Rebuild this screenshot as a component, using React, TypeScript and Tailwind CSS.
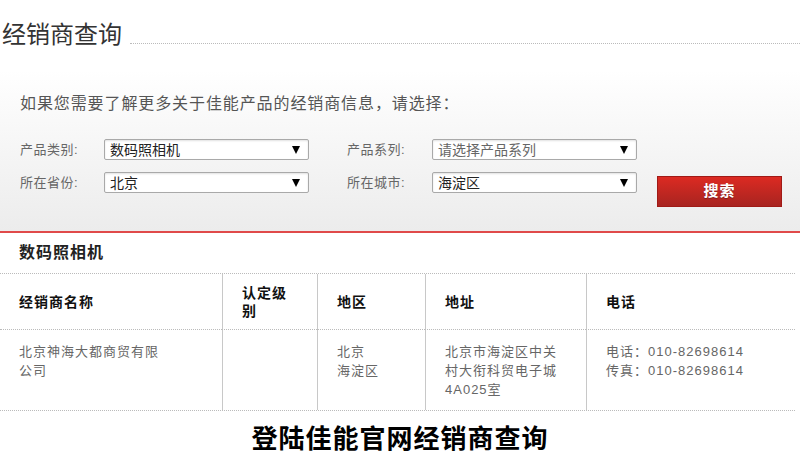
import * as React from "react"

const font = { fontFamily: '"Liberation Sans", "Noto Sans CJK SC", sans-serif' }

function FakeSelect({ value, muted }: { value: string; muted?: boolean }) {
  return (
    <div className="flex h-[21px] w-[205px] items-center justify-between rounded-[2px] border border-[#a9a9a9] bg-white pl-[5px] pr-[8px] shadow-[inset_0_1px_2px_rgba(0,0,0,0.12)]">
      <span className={`text-[14px] leading-none ${muted ? "text-[#666]" : "text-[#222]"}`}>{value}</span>
      <span className="h-0 w-0 border-x-[4px] border-t-[8px] border-x-transparent border-t-black" />
    </div>
  )
}

const headCell = "flex items-center px-[19px] text-[14px] font-bold leading-[18px] tracking-[1px] text-[#111]"
const dataCell = "px-[19px] pt-[12px] text-[13px] leading-[19px] tracking-[1px] text-[#666]"
const dataSide = "border-l border-t border-l-[#c8c8c8] border-t-[#bbb] [border-top-style:dotted]"

export default function App() {
  return (
    <div style={font} className="h-[457px] w-[800px] overflow-hidden bg-white">
      {/* title */}
      <div className="flex items-end pt-[20px]">
        <h1 className="pl-[2px] text-[24px] leading-[30px] text-[#333]">经销商查询</h1>
        <div className="mb-[6px] ml-[8px] flex-1 border-b border-dotted border-[#bbb]" />
      </div>

      {/* search panel */}
      <div className="mt-[20px] border-b-2 border-[#e04a4a] bg-gradient-to-b from-white to-[#ececec] pb-[24px] pl-[20px] pt-[24px]">
        <p className="text-[16px] leading-[20px] tracking-[0.9px] text-[#555]">如果您需要了解更多关于佳能产品的经销商信息，请选择：</p>

        <div className="mt-[25px] flex items-center">
          <span className="w-[84px] text-[13px] tracking-[0.5px] text-[#666]">产品类别:</span>
          <FakeSelect value="数码照相机" />
          <span className="ml-[38px] w-[85px] text-[13px] tracking-[0.5px] text-[#666]">产品系列:</span>
          <FakeSelect value="请选择产品系列" muted />
        </div>

        <div className="mt-[12px] flex items-start">
          <span className="w-[84px] text-[13px] leading-[21px] tracking-[0.5px] text-[#666]">所在省份:</span>
          <FakeSelect value="北京" />
          <span className="ml-[38px] w-[85px] text-[13px] leading-[21px] tracking-[0.5px] text-[#666]">所在城市:</span>
          <FakeSelect value="海淀区" />
          <button className="ml-[20px] mt-[4px] h-[31px] w-[125px] border border-[#a01a16] bg-gradient-to-b from-[#dc2a22] to-[#a82420] text-[15px] font-bold tracking-[1px] text-white [text-shadow:0_1px_1px_rgba(0,0,0,0.3)]">
            搜索
          </button>
        </div>
      </div>

      {/* result title */}
      <h2 className="pl-[19px] pt-[10px] text-[16px] font-bold leading-[20px] tracking-[1px] text-[#222]">数码照相机</h2>

      {/* table */}
      <div className="mt-[10px] grid w-[795px] grid-cols-[222px_95px_108px_161px_209px] border-y border-dotted border-[#bbb]">
        <div className={`${headCell} h-[55px]`}>经销商名称</div>
        <div className={`${headCell} border-l border-[#c8c8c8]`}>
          <div className="w-[50px]">认定级别</div>
        </div>
        <div className={`${headCell} border-l border-[#c8c8c8]`}>地区</div>
        <div className={`${headCell} border-l border-[#c8c8c8]`}>地址</div>
        <div className={`${headCell} border-l border-[#c8c8c8]`}>电话</div>

        <div className={`${dataCell} h-[81px] border-t border-dotted border-[#bbb]`}>
          <div className="w-[145px]">北京神海大都商贸有限公司</div>
        </div>
        <div className={`${dataCell} ${dataSide}`} />
        <div className={`${dataCell} ${dataSide}`}>
          北京<br />海淀区
        </div>
        <div className={`${dataCell} ${dataSide}`}>
          <div className="w-[120px]">北京市海淀区中关村大衔科贸电子城4A025室</div>
        </div>
        <div className={`${dataCell} ${dataSide}`}>
          电话：010-82698614<br />传真：010-82698614
        </div>
      </div>

      {/* caption */}
      <p className="mt-[13px] text-center text-[26px] font-bold leading-[30px] tracking-[1px] text-black">登陆佳能官网经销商查询</p>
    </div>
  )
}
